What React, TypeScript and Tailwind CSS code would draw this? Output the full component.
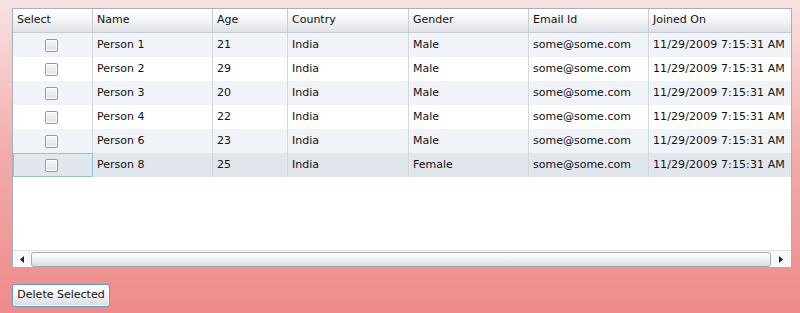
import React from "react";

const rows = [
  { name: "Person 1", age: 21, gender: "Male" },
  { name: "Person 2", age: 29, gender: "Male" },
  { name: "Person 3", age: 20, gender: "Male" },
  { name: "Person 4", age: 22, gender: "Male" },
  { name: "Person 6", age: 23, gender: "Male" },
  { name: "Person 8", age: 25, gender: "Female" },
];

const cols = [
  { label: "Select", w: "w-[80px]" },
  { label: "Name", w: "w-[120px]" },
  { label: "Age", w: "w-[75px]" },
  { label: "Country", w: "w-[121px]" },
  { label: "Gender", w: "w-[120px]" },
  { label: "Email Id", w: "w-[120px]" },
  { label: "Joined On", w: "w-[160px]" },
];

function Checkbox() {
  return (
    <div className="w-[13px] h-[13px] rounded-[2px] border border-[#8e99a5] bg-gradient-to-b from-[#f4f6f8] to-[#dde3ea] shadow-[inset_0_0_0_1px_#ffffff]" />
  );
}

export default function App() {
  return (
    <div
      className="w-[800px] h-[313px] overflow-hidden bg-gradient-to-b from-[#f8e2e2] via-[#f2abab] to-[#ee8a8a] pt-[8px] pl-[12px]"
      style={{ fontFamily: '"DejaVu Sans", Verdana, sans-serif' }}
    >
      <div className="w-[780px] h-[260px] border border-[#a6b0ba] bg-white flex flex-col overflow-hidden">
        {/* header */}
        <div className="flex h-[24px] shrink-0 bg-gradient-to-b from-[#ffffff] via-[#f3f4f6] to-[#dfe2e6] border-b border-[#c6ccd3]">
          {cols.map((c, i) => (
            <div
              key={c.label}
              className={`${c.w} shrink-0 h-full flex items-center pl-[4px] text-[11px] text-[#111] ${i < cols.length - 1 ? "border-r border-[#c8cdd3]" : ""}`}
            >
              {c.label}
            </div>
          ))}
        </div>
        {/* body */}
        <div className="flex-1 flex flex-col">
          {rows.map((r, ri) => {
            const last = ri === rows.length - 1;
            const bg = last ? "bg-[#e2e7ed]" : ri % 2 === 0 ? "bg-[#f0f3f8]" : "bg-white";
            const vals = [r.name, String(r.age), "India", r.gender, "some@some.com", "11/29/2009 7:15:31 AM"];
            return (
              <div key={r.name} className={`flex h-[24px] ${bg}`}>
                <div
                  className={`w-[80px] shrink-0 h-full flex items-center justify-center pr-[3px] ${last ? "border border-[#8fc4d8]" : "border-r border-[#d3d8de]"}`}
                >
                  <Checkbox />
                </div>
                {vals.map((v, vi) => (
                  <div
                    key={vi}
                    className={`${cols[vi + 1].w} shrink-0 h-full flex items-center pl-[4px] pt-[1px] text-[11px] text-[#111] whitespace-nowrap ${vi === vals.length - 1 ? "tracking-[0.1px]" : "border-r border-[#d3d8de]"}`}
                  >
                    {v}
                  </div>
                ))}
              </div>
            );
          })}
        </div>
        {/* scrollbar */}
        <div className="h-[17px] shrink-0 flex items-center bg-[#f7f8f9] border-t border-[#dde1e5]">
          <div className="w-[18px] h-full flex items-center justify-center">
            <svg width="4" height="7" viewBox="0 0 4 7">
              <path d="M4 0 L0 3.5 L4 7 Z" fill="#222" />
            </svg>
          </div>
          <div className="flex-1 h-[15px] rounded-[3px] border border-[#a3adb8] bg-gradient-to-b from-[#ffffff] via-[#eef0f2] to-[#d9dde2]" />
          <div className="w-[20px] h-full flex items-center justify-center">
            <svg width="4" height="7" viewBox="0 0 4 7">
              <path d="M0 0 L4 3.5 L0 7 Z" fill="#222" />
            </svg>
          </div>
        </div>
      </div>
      <div className="mt-[16px]">
        <button className="w-[98px] h-[23px] rounded-[3px] border border-[#5f9fc4] bg-gradient-to-b from-[#ffffff] via-[#f1f3f5] to-[#d8dde3] shadow-[inset_0_0_0_1px_#ffffff] text-[11px] text-[#111] flex items-center justify-center">
          Delete Selected
        </button>
      </div>
    </div>
  );
}
